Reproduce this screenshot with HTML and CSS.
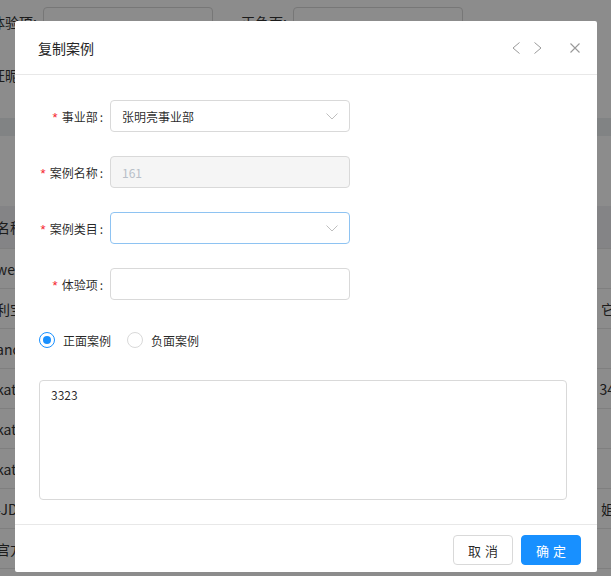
FILE: index.html
```html
<!DOCTYPE html>
<html lang="zh-CN">
<head>
<meta charset="utf-8">
<title>复制案例</title>
<link rel="stylesheet" href="styles.css">
</head>
<body>
<div class="page">
  <div class="filters">
    <div class="frow">
      <span class="flabel w1">具体验项:</span><span class="finput i1"></span>
      <span class="flabel w2">正负面:</span><span class="finput"></span>
    </div>
    <div class="frow r2">
      <span class="flabel w1">旺旺昵称:</span>
    </div>
  </div>
  <div class="gapband"></div>
  <div class="tablecard">
    <div class="toolbar"></div>
    <div class="trow thead"><span class="c1">名称</span><span class="c3"></span></div>
    <div class="trow"><span class="c1">weitao</span><span class="c3"></span></div>
    <div class="trow"><span class="c1">利宝</span><span class="c3">它</span></div>
    <div class="trow"><span class="c1">ancy</span><span class="c3"></span></div>
    <div class="trow"><span class="c1">katie</span><span class="c3">34</span></div>
    <div class="trow"><span class="c1">katie</span><span class="c3"></span></div>
    <div class="trow"><span class="c1">katie</span><span class="c3"></span></div>
    <div class="trow"><span class="c1">-JD</span><span class="c3">姐</span></div>
    <div class="trow"><span class="c1">官方</span><span class="c3"></span></div>
    <div class="trow"><span class="c1">张三</span><span class="c3"></span></div>
  </div>
</div>

<div class="mask"></div>

<div class="modal">
  <div class="mhead">
    <span class="mtitle">复制案例</span>
    <svg class="ico prev" width="8" height="12" viewBox="0 0 8 12"><polyline points="7.5,0.5 1,6 7.5,11.5" fill="none" stroke="#999" stroke-width="1"/></svg>
    <svg class="ico next" width="8" height="12" viewBox="0 0 8 12"><polyline points="0.5,0.5 7,6 0.5,11.5" fill="none" stroke="#999" stroke-width="1"/></svg>
    <svg class="ico close" width="10" height="10" viewBox="0 0 10 10"><path d="M0.5 0.5L9.5 9.5M9.5 0.5L0.5 9.5" fill="none" stroke="#999" stroke-width="1.1"/></svg>
  </div>
  <div class="mbody">
    <div class="frm">
      <div class="lbl"><span class="req">*</span>事业部<span class="colon">:</span></div>
      <div class="ctl sel"><span>张明亮事业部</span>
        <svg class="arrow" width="12" height="7" viewBox="0 0 12 7"><polyline points="0.5,0.5 6,6 11.5,0.5" fill="none" stroke="#bfbfbf" stroke-width="1"/></svg>
      </div>
    </div>
    <div class="frm">
      <div class="lbl"><span class="req">*</span>案例名称<span class="colon">:</span></div>
      <div class="ctl dis"><span>161</span></div>
    </div>
    <div class="frm">
      <div class="lbl"><span class="req">*</span>案例类目<span class="colon">:</span></div>
      <div class="ctl sel focus"><span></span>
        <svg class="arrow" width="12" height="7" viewBox="0 0 12 7"><polyline points="0.5,0.5 6,6 11.5,0.5" fill="none" stroke="#bfbfbf" stroke-width="1"/></svg>
      </div>
    </div>
    <div class="frm">
      <div class="lbl"><span class="req">*</span>体验项<span class="colon">:</span></div>
      <div class="ctl"><span></span></div>
    </div>
    <div class="radios">
      <label class="radio"><span class="rdot on"></span><span class="rtext">正面案例</span></label>
      <label class="radio"><span class="rdot"></span><span class="rtext">负面案例</span></label>
    </div>
    <div class="tarea">3323</div>
  </div>
  <div class="mfoot">
    <button class="btn">取消</button>
    <button class="btn primary">确定</button>
  </div>
</div>
</body>
</html>
```

FILE: styles.css
```css
html, body {
  margin: 0;
  padding: 0;
}
body {
  width: 611px;
  height: 576px;
  overflow: hidden;
  position: relative;
  background: #fff;
  font-family: "Noto Sans CJK SC", "Noto Sans", sans-serif;
  font-size: 12px;
  color: rgba(0, 0, 0, 0.85);
}

/* background page */
.page {
  width: 611px;
  height: 576px;
  overflow: hidden;
  background: #fff;
}
.filters {
  padding-top: 7px;
  height: 118px;
  box-sizing: border-box;
}
.frow {
  display: flex;
  align-items: center;
  height: 30px;
}
.frow.r2 {
  margin-top: 23px;
}
.flabel {
  display: flex;
  justify-content: flex-end;
  box-sizing: border-box;
  padding-right: 6px;
  white-space: nowrap;
  font-size: 14px;
  color: #333;
}
.flabel.w1 { width: 43px; }
.flabel.w2 { width: 80px; }
.finput {
  display: block;
  width: 170px;
  height: 30px;
  box-sizing: border-box;
  border: 1px solid #d9d9d9;
  border-radius: 4px;
}
.gapband {
  height: 18px;
  background: #eceef1;
}
.toolbar {
  height: 70px;
}
.trow {
  display: flex;
  justify-content: space-between;
  align-items: center;
  height: 39px;
  border-bottom: 1px solid #e8e8e8;
  font-size: 14px;
  color: #333;
  white-space: nowrap;
}
.trow.thead {
  height: 42px;
  background: #f0f1f4;
}
.c1 { margin-left: -4px; }
.c3 { margin-right: -4px; }

.mask {
  position: absolute;
  inset: 0;
  background: rgba(0, 0, 0, 0.45);
}

/* modal */
.modal {
  position: absolute;
  left: 15px;
  top: 21px;
  width: 582px;
  height: 551px;
  background: #fff;
  border-radius: 2px;
  display: flex;
  flex-direction: column;
}
.mhead {
  height: 54px;
  box-sizing: border-box;
  border-bottom: 1px solid #e8e8e8;
  display: flex;
  align-items: center;
  padding: 0 17px 0 23px;
}
.mtitle {
  flex: 1;
  font-size: 14px;
  color: #262626;
}
.ico { display: block; }
.next { margin-left: 14px; }
.close { margin-left: 28px; }

.mbody {
  flex: 1;
  padding: 25px 24px 0 24px;
}
.frm {
  display: flex;
  align-items: center;
  height: 32px;
  margin-bottom: 24px;
}
.lbl {
  width: 71px;
  display: flex;
  justify-content: flex-end;
  align-items: center;
  color: rgba(0, 0, 0, 0.85);
  white-space: nowrap;
}
.req {
  color: #f5222d;
  margin-right: 4px;
  font-family: "Liberation Sans", sans-serif;
  font-size: 13px;
  line-height: 1;
  position: relative;
  top: 1px;
}
.colon {
  margin: 0 7px 0 2px;
}
.ctl {
  width: 240px;
  height: 32px;
  box-sizing: border-box;
  border: 1px solid #d9d9d9;
  border-radius: 4px;
  background: #fff;
  padding: 0 11px;
  display: flex;
  align-items: center;
  justify-content: space-between;
  color: rgba(0, 0, 0, 0.85);
}
.ctl.dis {
  background: #f5f5f5;
  color: #b8bfc8;
}
.ctl.focus {
  border-color: #8ec3f2;
}
.arrow { display: block; }

.radios {
  display: flex;
  align-items: center;
  height: 32px;
  margin-bottom: 24px;
}
.radio {
  display: flex;
  align-items: center;
  margin-right: 8px;
}
.rdot {
  width: 16px;
  height: 16px;
  box-sizing: border-box;
  border: 1px solid #d9d9d9;
  border-radius: 50%;
  position: relative;
  background: #fff;
}
.rdot.on {
  border-color: #1890ff;
}
.rdot.on::after {
  content: "";
  position: absolute;
  left: 3px;
  top: 3px;
  width: 8px;
  height: 8px;
  border-radius: 50%;
  background: #1890ff;
}
.rtext {
  padding: 0 8px;
  color: rgba(0, 0, 0, 0.85);
}
.tarea {
  width: 528px;
  height: 120px;
  box-sizing: border-box;
  border: 1px solid #d9d9d9;
  border-radius: 4px;
  padding: 4px 11px;
  line-height: 20px;
  color: rgba(0, 0, 0, 0.85);
}

.mfoot {
  height: 48px;
  box-sizing: border-box;
  border-top: 1px solid #e8e8e8;
  display: flex;
  justify-content: flex-end;
  align-items: flex-start;
  gap: 8px;
  padding: 10px 16px 0;
}
.btn {
  width: 60px;
  height: 30px;
  box-sizing: border-box;
  border: 1px solid #d9d9d9;
  border-radius: 4px;
  background: #fff;
  font-family: "Noto Sans CJK SC", sans-serif;
  font-size: 13px;
  letter-spacing: 4px;
  padding: 0 0 0 4px;
  color: rgba(0, 0, 0, 0.85);
}
.btn.primary {
  background: #1890ff;
  border-color: #1890ff;
  color: #fff;
}
```
